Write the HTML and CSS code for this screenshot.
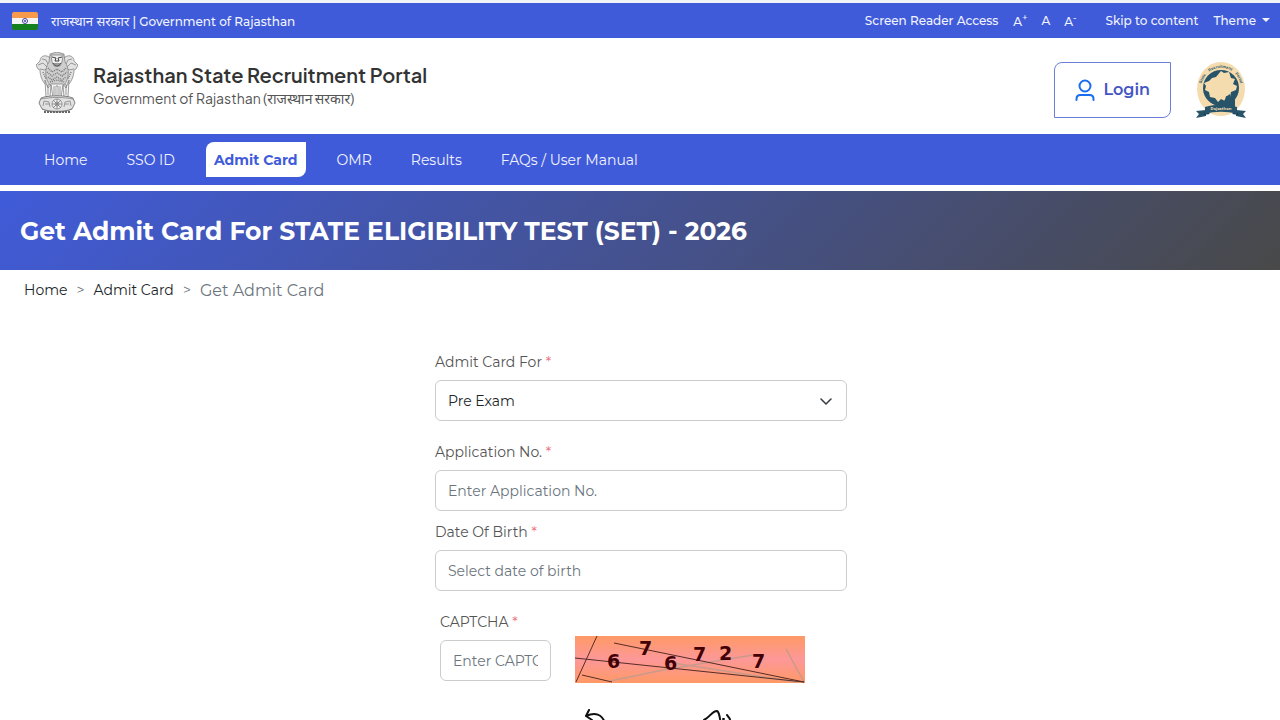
FILE: index.html
```html
<!DOCTYPE html>
<html lang="en">
<head>
    <meta charset="UTF-8">
    <meta name="viewport" content="width=device-width, initial-scale=1.0">
    <title>Rajasthan State Recruitment Portal</title>
    <link rel="stylesheet" href="styles.css">
</head>
<body>
    <div class="topbar">
        <div class="topbar-left">
            <svg class="flag" width="26" height="18" viewBox="0 0 26 18">
                <clipPath id="flagClip"><rect width="26" height="18" rx="2"/></clipPath>
                <g clip-path="url(#flagClip)">
                    <rect width="26" height="6" fill="#f79a4c"/>
                    <rect y="6" width="26" height="6" fill="#f5f5f5"/>
                    <rect y="12" width="26" height="6" fill="#15801d"/>
                    <circle cx="13" cy="9" r="2.5" fill="none" stroke="#45469c"/>
                    <circle cx="13" cy="9" r="1" fill="#45469c"/>
                </g>
            </svg>
            <span><span class="hindi">राजस्थान सरकार</span> | Government of Rajasthan</span>
        </div>
        <div class="topbar-right">
            <a href="#">Screen Reader Access</a>
            <div class="text-size">
                <button type="button">A<sup>+</sup></button>
                <button type="button">A</button>
                <button type="button">A<sup>-</sup></button>
            </div>
            <a href="#content">Skip to content</a>
            <button type="button" class="theme">Theme</button>
        </div>
    </div>

    <header class="header">
        <svg class="emblem" width="42" height="62" viewBox="0 0 42 62" fill="none" stroke="#777" stroke-width="0.7">
            <!-- side lions -->
            <path fill="#e2e2e2" d="M13 5C8 2 4 5 4 9L0 13L2 17L4 18C4 24 7 31 11 34L17 29V10Z"/>
            <path fill="#e2e2e2" d="M29 5C34 2 38 5 38 9L42 13L40 17L38 18C38 24 35 31 31 34L25 29V10Z"/>
            <path d="M2 13L7 11L11 15M4 17L9 18L13 14M6 7L10 8L12 12M40 13L35 11L31 15M38 17L33 18L29 14M36 7L32 8L30 12"/>
            <!-- front lion -->
            <path fill="#cfcfcf" d="M14 2L21 0L28 2L29 10C34 17 33 27 28 33L14 33C9 27 8 17 13 10Z"/>
            <path fill="#eee" d="M15 3H27L26 10L24 14H18L16 10Z"/>
            <path stroke="#444" stroke-width="1" d="M16 5L20 6M26 5L22 6M20 6L19 9H23L22 6M17 11C19 15 23 15 25 11M18 12H24"/>
            <path stroke="#777" stroke-width="1.5" stroke-dasharray="1 1" d="M12 16L16 20L21 17L26 20L30 16M11 20L16 24L21 21L26 24L31 20M12 25L16 28L21 25L26 28L30 25M14 30L21 28L28 30M7 20L10 27M35 20L32 27"/>
            <!-- legs -->
            <path fill="#f4f4f4" d="M9 28L10 45H14L15 33L17 45H20V34H22V45H25L27 33L28 45H32L33 28L30 36L27 32H15L12 36Z"/>
            <path d="M12 33V43M18 34V43M24 34V43M30 33V43"/>
            <!-- abacus with the wheel -->
            <path fill="#e2e2e2" stroke="#555" d="M5 46C12 43 30 43 37 46L39 51L36 57C28 61 14 61 6 57L3 51Z"/>
            <circle cx="21" cy="52" r="5" fill="#eee"/>
            <circle cx="21" cy="52" r="2"/>
            <path d="M21 47V57M16 52H26M17 48L25 56M25 48L17 56M7 54L8 49L13 50L14 55M9 52H13M35 54L34 49L29 50L28 55M33 52H29M5 47C14 45 28 45 37 47M6 57C14 60 28 60 36 57"/>
            <path stroke="#666" stroke-width="2" stroke-dasharray="2 1" d="M8 60H34"/>
        </svg>
        <div class="brand">
            <h1>Rajasthan State Recruitment Portal</h1>
            <p>Government of Rajasthan (राजस्थान सरकार)</p>
        </div>
        <a class="login" href="#">
            <svg width="20" height="22" viewBox="0 0 20 22" fill="none" stroke="#1a6df0" stroke-width="2" stroke-linecap="round">
                <circle cx="10" cy="7" r="5.5"/>
                <path d="M1.500 21V20C1.500 17.500 3 16 5.500 16H14.500C17 16 18.500 17.500 18.500 20V21"/>
            </svg>
            Login
        </a>
        <svg class="seal" width="52" height="58" viewBox="0 0 52 58">
            <defs>
                <path id="sealArc" d="M8 37A20 21 0 1 1 44 37"/>
            </defs>
            <ellipse cx="26" cy="28" rx="24" ry="27" fill="#f5dcae"/>
            <circle cx="26" cy="27" r="18" fill="#285469"/>
            <path fill="#f5dcae" d="M26 10L29 12L34 11L36 17L40 18L38 23L42 25L41 29L36 31L35 36L31 35L30 40L26 38L23 41L20 37L15 36L14 31L10 29L11 25L9 22L14 20L17 17L21 16Z"/>
            <path fill="#285469" d="M32 35L35 33V37H40V46H29V40Z"/>
            <text class="seal-text" text-anchor="middle"><textPath href="#sealArc" startOffset="50%">State&#160;&#160;&#160; Recruitment&#160;&#160;&#160; Portal</textPath></text>
            <path fill="#285469" d="M1 50L11 49V55L1 57L4 53ZM51 50L41 49V55L51 57L48 53Z"/>
            <path fill="#1c4258" d="M8 54L11 49L15 53ZM44 54L41 49L37 53Z"/>
            <path fill="#285469" d="M10 46C20 43 32 43 42 46V53C32 50 20 50 10 53Z"/>
            <text class="seal-name" x="26" y="49" text-anchor="middle">Rajasthan</text>
        </svg>
    </header>

    <nav class="menu">
        <a href="#">Home</a>
        <a href="#">SSO ID</a>
        <a href="#" class="active">Admit Card</a>
        <a href="#">OMR</a>
        <a href="#">Results</a>
        <a href="#">FAQs / User Manual</a>
    </nav>

    <div class="banner">
        <h2>Get Admit Card For STATE ELIGIBILITY TEST (SET) - 2026</h2>
    </div>

    <div class="breadcrumb">
        <a href="#">Home</a>
        <span class="sep">&gt;</span>
        <a href="#">Admit Card</a>
        <span class="sep">&gt;</span>
        <span class="current">Get Admit Card</span>
    </div>

    <main id="content">
        <form class="form">
            <div class="field">
                <label for="exam">Admit Card For <span class="required">*</span></label>
                <select id="exam" class="control">
                    <option>Pre Exam</option>
                </select>
            </div>
            <div class="field field-close">
                <label for="appNo">Application No. <span class="required">*</span></label>
                <input id="appNo" class="control" type="text" placeholder="Enter Application No.">
            </div>
            <div class="field">
                <label for="dob">Date Of Birth <span class="required">*</span></label>
                <input id="dob" class="control" type="text" placeholder="Select date of birth">
            </div>
            <div class="captcha">
                <div class="captcha-field">
                    <label for="captcha">CAPTCHA <span class="required">*</span></label>
                    <input id="captcha" class="control" type="text" placeholder="Enter CAPTCHA">
                </div>
                <div class="captcha-side">
                    <svg class="captcha-image" width="230" height="47" viewBox="0 0 230 47">
                        <defs>
                            <linearGradient id="captchaBg" x1="0" y1="0" x2="0" y2="1">
                                <stop offset="0" stop-color="#ff9966"/>
                                <stop offset="0.5" stop-color="#fc9898"/>
                                <stop offset="1" stop-color="#ff9966"/>
                            </linearGradient>
                        </defs>
                        <rect width="230" height="47" fill="url(#captchaBg)"/>
                        <g fill="none" stroke="#c99a8b" stroke-width="1.500">
                            <path d="M35 45L88 34L178 19M88 34L98 27L222 46M211 13L229 46"/>
                        </g>
                        <g fill="none" stroke="#572c26">
                            <path d="M0 22L95 32L229 46M39 7L229 46M22 0L1 46M7 39L37 46"/>
                        </g>
                        <g class="captcha-digits">
                            <text x="32" y="32">6</text>
                            <text x="64" y="19">7</text>
                            <text x="89" y="34">6</text>
                            <text x="118" y="25">7</text>
                            <text x="144" y="24">2</text>
                            <text x="177" y="32">7</text>
                        </g>
                    </svg>
                    <div class="captcha-actions">
                        <button type="button" aria-label="Refresh captcha">
                            <svg width="32" height="32" viewBox="0 0 32 32" fill="none" stroke="#111" stroke-width="2" stroke-linecap="round" stroke-linejoin="round">
                                <path d="M6 1L3 7L9 11M3 7C12 3 19 5 22 14C24 23 16 30 8 27"/>
                            </svg>
                        </button>
                        <button type="button" aria-label="Play captcha">
                            <svg width="32" height="32" viewBox="0 0 32 32" fill="none" stroke="#111" stroke-width="2" stroke-linecap="round" stroke-linejoin="round">
                                <path d="M1 11C7 8 9 2 14 2C18 4 16 14 20 23C16 25 12 20 6 21C2 20 0 13 1 11M20 10L21 10M24 6C28 10 30 17 26 22"/>
                            </svg>
                        </button>
                    </div>
                </div>
            </div>
        </form>
    </main>
</body>
</html>
```
FILE: styles.css
```css
* {
    box-sizing: border-box;
}

body {
    margin: 0;
    background: #fff;
    color: #212529;
    font-family: Montserrat, Inter, "Noto Sans", sans-serif;
    font-size: 14px;
}

a {
    color: inherit;
    text-decoration: none;
}

button {
    background: none;
    border: none;
    padding: 0;
    color: inherit;
    font: inherit;
    cursor: pointer;
}

h1, h2, p {
    margin: 0;
}

svg {
    display: block;
    flex-shrink: 0;
}

/* top bar */
.topbar {
    display: flex;
    justify-content: space-between;
    align-items: center;
    height: 38px;
    padding: 0 10px 0 12px;
    border-top: 3px solid #f1f3f6;
    background: #405bd9;
    color: #f1f4ff;
    font-size: 12px;
    font-weight: 500;
}

.topbar-left {
    display: flex;
    align-items: center;
    gap: 13px;
}

.topbar-left .hindi {
    font-size: 13px;
    font-weight: 400;
}

.topbar-right {
    display: flex;
    align-items: center;
    gap: 15px;
}

.text-size {
    display: flex;
    gap: 14px;
    margin-right: 14px;
}

.text-size sup {
    font-size: 9px;
    line-height: 1;
}

.theme::after {
    content: "";
    display: inline-block;
    margin-left: 6px;
    vertical-align: 3px;
    border-top: 4px solid;
    border-left: 4px solid transparent;
    border-right: 4px solid transparent;
}

/* header */
.header {
    display: flex;
    align-items: center;
    height: 96px;
    padding: 0 33px 0 36px;
}

.emblem {
    margin-bottom: 7px;
}

.brand {
    flex: 1;
    margin: 0 15px 2px;
    font-family: "Plus Jakarta Sans", Figtree, Inter, "Noto Sans", sans-serif;
}

.brand h1 {
    color: #333;
    font-size: 20px;
    font-weight: 600;
    line-height: 26px;
}

.brand p {
    color: #555;
    line-height: 20px;
}

.login {
    display: flex;
    align-items: center;
    gap: 8px;
    height: 56px;
    margin: 7px 24px 0 0;
    padding: 0 20px;
    border: 1px solid #6b7fd9;
    border-radius: 8px 0;
    color: #4456c4;
    font-size: 16px;
    font-weight: 600;
}

.seal {
    margin-top: 8px;
}

.seal-text {
    fill: #285469;
    font-family: "Liberation Sans", sans-serif;
    font-size: 4px;
    font-weight: 700;
}

.seal-name {
    fill: #f5dcae;
    font-size: 4px;
    font-weight: 700;
}

/* menu */
.menu {
    display: flex;
    align-items: center;
    gap: 23px;
    height: 51px;
    padding: 0 36px;
    background: #405bd9;
    color: #f1f4ff;
}

.menu a {
    padding: 1px 8px 0;
    line-height: 34px;
}

.menu .active {
    border-radius: 8px 0;
    background: #fff;
    color: #405bd9;
    font-weight: 700;
}

/* title banner */
.banner {
    display: flex;
    align-items: center;
    height: 79px;
    margin-top: 6px;
    padding: 0 20px;
    background: linear-gradient(135deg, #405bd9, #494949);
    color: #fff;
}

.banner h2 {
    font-size: 25px;
    font-weight: 700;
}

.breadcrumb {
    display: flex;
    align-items: center;
    gap: 9px;
    height: 40px;
    padding: 0 24px;
}

.breadcrumb .sep {
    color: #6c757d;
}

.breadcrumb .current {
    color: #6c757d;
    font-size: 16px;
}

/* form */
.form {
    width: 100%;
    max-width: 414px;
    margin: 42px auto 0;
    padding-left: 2px;
}

.field {
    margin-bottom: 21px;
}

.field-close {
    margin-bottom: 11px;
}

label {
    display: block;
    margin-bottom: 8px;
    color: #555;
    line-height: 20px;
}

.required {
    color: #ee7480;
}

.control {
    display: block;
    width: 100%;
    height: 41px;
    padding: 0 12px;
    border: 1px solid #ccc;
    border-radius: 6px;
    background: #fff;
    color: #212529;
    font: inherit;
}

.control::placeholder {
    color: #6c757d;
    opacity: 1;
}

select.control {
    appearance: none;
    background: url("data:image/svg+xml,%3Csvg xmlns='http://www.w3.org/2000/svg' viewBox='0 0 12 12'%3E%3Cpath fill='none' stroke='%23343a40' stroke-width='1.500' stroke-linecap='round' stroke-linejoin='round' d='M1 4l5 5 5-5'/%3E%3C/svg%3E") no-repeat right 14px center / 12px 12px;
}

.captcha {
    display: flex;
    gap: 24px;
    padding-left: 5px;
}

.captcha-field {
    flex: 0 0 111px;
}

.captcha-side {
    padding-top: 24px;
}

.captcha-digits {
    fill: #420006;
    font-family: "DejaVu Sans", sans-serif;
    font-size: 19px;
    font-weight: 700;
}

.captcha-actions {
    display: flex;
    gap: 88px;
    margin-top: 26px;
    padding: 0 8px 24px;
}
```
